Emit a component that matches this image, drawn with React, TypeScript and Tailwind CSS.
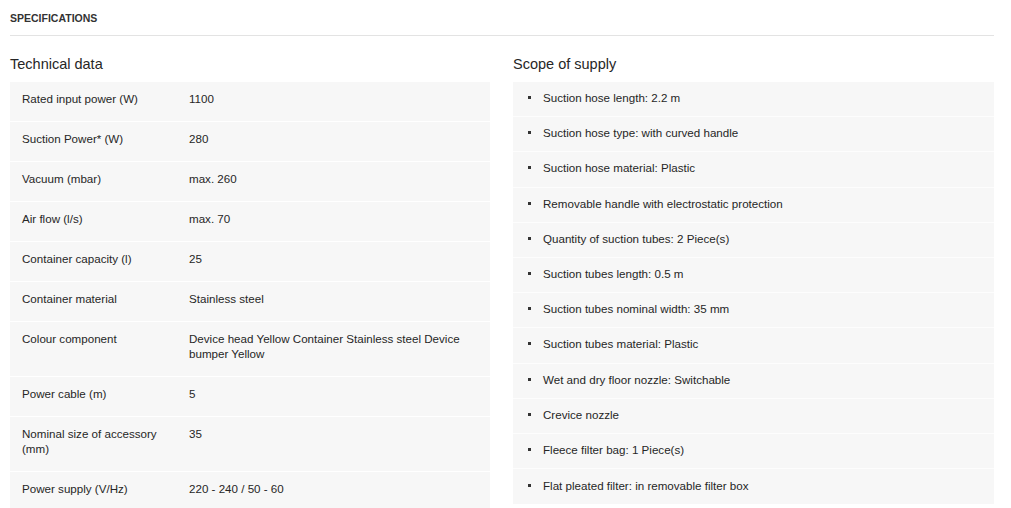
const technicalData: { label: string; value: string }[] = [
  { label: "Rated input power (W)", value: "1100" },
  { label: "Suction Power* (W)", value: "280" },
  { label: "Vacuum (mbar)", value: "max. 260" },
  { label: "Air flow (l/s)", value: "max. 70" },
  { label: "Container capacity (l)", value: "25" },
  { label: "Container material", value: "Stainless steel" },
  { label: "Colour component", value: "Device head Yellow Container Stainless steel Device bumper Yellow" },
  { label: "Power cable (m)", value: "5" },
  { label: "Nominal size of accessory (mm)", value: "35" },
  { label: "Power supply (V/Hz)", value: "220 - 240 / 50 - 60" },
];

const scopeOfSupply = [
  "Suction hose length: 2.2 m",
  "Suction hose type: with curved handle",
  "Suction hose material: Plastic",
  "Removable handle with electrostatic protection",
  "Quantity of suction tubes: 2 Piece(s)",
  "Suction tubes length: 0.5 m",
  "Suction tubes nominal width: 35 mm",
  "Suction tubes material: Plastic",
  "Wet and dry floor nozzle: Switchable",
  "Crevice nozzle",
  "Fleece filter bag: 1 Piece(s)",
  "Flat pleated filter: in removable filter box",
];

export default function App() {
  return (
    <div className="min-h-screen bg-white text-[#262626] font-['Liberation_Sans',Arial,sans-serif]">
      <div className="ml-[10px] w-[984px]">
        {/* Header */}
        <div className="pt-[12px] pb-[10px] border-b border-[#e3e3e3]">
          <h2 className="text-[10.5px] leading-[13px] font-bold uppercase text-[#333]">Specifications</h2>
        </div>

        <div className="flex gap-[23px] mt-[20px]">
          {/* Technical data */}
          <div className="w-[480px]">
            <h3 className="text-[14.5px] leading-[17px] mb-[9px]">Technical data</h3>
            <div className="flex flex-col gap-px">
              {technicalData.map((row) => (
                <div key={row.label} className="flex bg-[#f7f7f7] pt-[9px] pb-[15px] text-[11.6px] leading-[15px]">
                  <div className="w-[179px] pl-[12px] pr-[25px]">{row.label}</div>
                  <div className="w-[272px]">{row.value}</div>
                </div>
              ))}
            </div>
          </div>

          {/* Scope of supply */}
          <div className="w-[481px]">
            <h3 className="text-[14.5px] leading-[17px] mb-[9px]">Scope of supply</h3>
            <ul className="bg-[#f7f7f7]">
              {scopeOfSupply.map((item, i) => (
                <li
                  key={item}
                  className={`flex items-center h-[35.2px] pb-[3px] text-[11.6px] leading-[15px] ${
                    i < scopeOfSupply.length - 1 ? "border-b border-white/70" : ""
                  }`}
                >
                  <span className="ml-[15px] mr-[12px] w-[3px] h-[3px] bg-[#333]" />
                  <span>{item}</span>
                </li>
              ))}
            </ul>
          </div>
        </div>
      </div>
    </div>
  );
}
